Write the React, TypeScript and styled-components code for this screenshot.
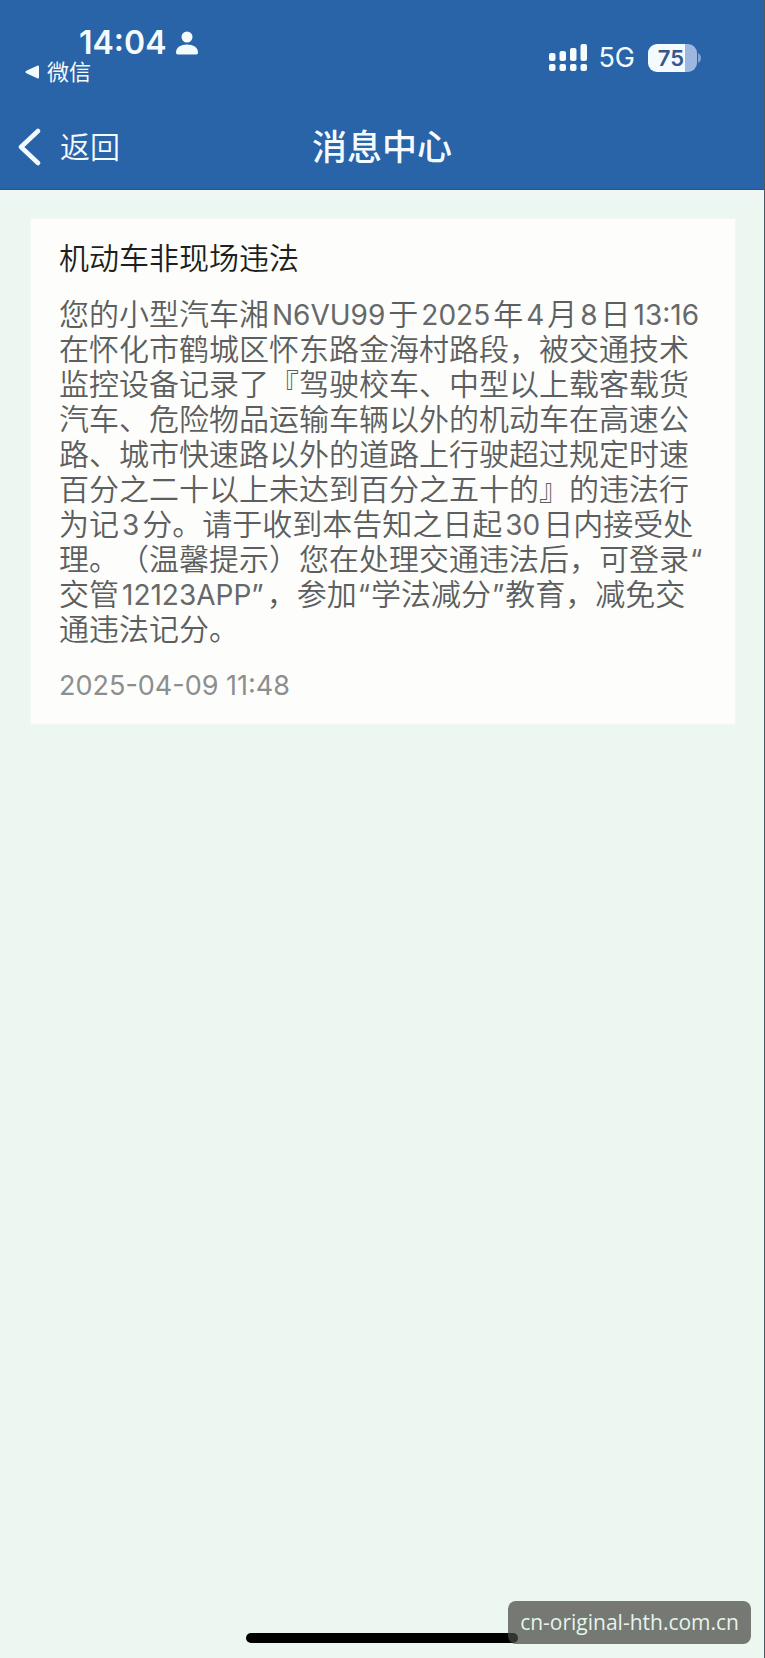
import React from "react";
import styled, { createGlobalStyle } from "styled-components";

const GlobalStyle = createGlobalStyle`
  * { box-sizing: border-box; }
  body {
    margin: 0;
    background: #ebf7f0;
    font-family: Inter, "Noto Sans CJK SC", sans-serif;
  }
  h1, h2, p { margin: 0; }
`;

const Page = styled.div`
  min-height: 100vh;
  display: flex;
  flex-direction: column;
  position: relative;
  border-right: 1px solid #4c5a60;
`;

const Header = styled.header`
  height: 190px;
  background: #2963a8;
  border-bottom: 1px solid #20588f;
  color: #f4fbff;
  display: flex;
  flex-direction: column;
`;

const StatusBar = styled.div`
  display: flex;
  justify-content: space-between;
  align-items: flex-start;
  height: 104px;
  padding: 25px 63px 0 25px;
`;

const StatusLeft = styled.div`
  display: flex;
  flex-direction: column;
`;

const Clock = styled.div`
  display: flex;
  align-items: center;
  gap: 10px;
  padding-left: 54px;
  font-size: 32px;
  line-height: 36px;
  font-weight: 600;
`;

const AppLink = styled.a`
  display: flex;
  align-items: center;
  gap: 8px;
  color: inherit;
  text-decoration: none;
  font-size: 22px;
  line-height: 22px;
`;

const StatusRight = styled.div`
  display: flex;
  align-items: center;
  padding-top: 18px;
`;

const Network = styled.span`
  margin: 0 13px 0 10px;
  font-size: 27px;
  line-height: 30px;
`;

const Battery = styled.div`
  display: flex;
  align-items: center;
  gap: 1px;
`;

const BatteryBody = styled.div`
  width: 49px;
  height: 28px;
  padding-right: 3px;
  border-radius: 9px;
  background: linear-gradient(to right, #f4fbff 76%, #9db8e0 76%);
  color: #37568c;
  font-size: 22px;
  line-height: 28px;
  font-weight: 600;
  text-align: center;
`;

const NavBar = styled.nav`
  display: grid;
  grid-template-columns: 1fr auto 1fr;
  align-items: center;
  height: 86px;
  padding: 2px 18px 0;
`;

const BackButton = styled.button`
  display: flex;
  align-items: center;
  justify-self: start;
  gap: 19px;
  padding: 0;
  border: 0;
  background: none;
  color: inherit;
  font-family: inherit;
  font-size: 30px;
  line-height: 36px;
  font-weight: 350;
`;

const Title = styled.h1`
  font-size: 35px;
  line-height: 40px;
  font-weight: 500;
`;

const Content = styled.main`
  flex: 1;
  padding: 19px 29px 0 31px;
  border-top: 10px solid #eff6f4;
`;

const Card = styled.article`
  padding: 21px 20px 20px 28px;
  background: #fdfefb;
  box-shadow: 0 0 3px 1px #f4f8f7;
`;

const CardTitle = styled.h2`
  color: #1d1f20;
  font-size: 30px;
  line-height: 36px;
  font-weight: 350;
`;

const Message = styled.p`
  margin-top: 21px;
  color: #5c5e60;
  font-size: 30px;
  line-height: 35px;
  font-weight: 350;
  text-spacing-trim: space-all;
`;

const Line = styled.span`
  display: block;
  white-space: nowrap;
`;

const Latin = styled.span<{ $gap: number }>`
  margin: 0 ${({ $gap }) => $gap}px;
  color: #66686a;
  font-size: 28px;
  line-height: 1;
  font-weight: 400;
`;

const Timestamp = styled.time`
  display: block;
  margin-top: 21px;
  color: #8c8e90;
  font-size: 27px;
  line-height: 36px;
`;

const Footer = styled.footer`
  display: flex;
  justify-content: center;
  padding-bottom: 15px;
`;

const HomeIndicator = styled.div`
  width: 36%;
  max-width: 272px;
  height: 10px;
  border-radius: 5px;
  background: #000;
`;

const Watermark = styled.div`
  position: absolute;
  right: 13px;
  bottom: 14px;
  padding: 0 12px;
  border-radius: 8px;
  background: rgba(70, 70, 66, 0.72);
  color: #e4f5ea;
  font-family: "Open Sans", sans-serif;
  font-size: 21px;
  line-height: 43px;
`;

const lines = [
  "您的小型汽车湘N6VU99于2025年4月8日13:16",
  "在怀化市鹤城区怀东路金海村路段，被交通技术",
  "监控设备记录了『驾驶校车、中型以上载客载货",
  "汽车、危险物品运输车辆以外的机动车在高速公",
  "路、城市快速路以外的道路上行驶超过规定时速",
  "百分之二十以上未达到百分之五十的』的违法行",
  "为记3分。请于收到本告知之日起30日内接受处",
  "理。（温馨提示）您在处理交通违法后，可登录“",
  "交管12123APP”，参加“学法减分”教育，减免交",
  "通违法记分。",
];

const renderLine = (line: string) =>
  line.split(/([A-Za-z0-9:“”]+)/).map((part, i) =>
    i % 2 ? (
      <Latin key={i} $gap={/[A-Z0-9]/.test(part) ? 3 : 1}>
        {part}
      </Latin>
    ) : (
      part
    ),
  );

const PersonIcon = () => (
  <svg width="22" height="24" viewBox="0 0 22 24" fill="currentColor" aria-hidden="true">
    <circle cx="11" cy="6" r="5.5" />
    <path d="M0 21.5C0 16.5 4.8 13.6 11 13.6s11 2.9 11 7.9c0 1.3-.7 2-2 2H2c-1.3 0-2-.7-2-2z" />
  </svg>
);

const SignalIcon = () => (
  <svg width="39" height="28" viewBox="0 0 39 28" fill="currentColor" aria-hidden="true">
    <rect x="0" y="9" width="6.5" height="8" rx="2" />
    <rect x="10.5" y="7" width="6.5" height="10" rx="2" />
    <rect x="21" y="4" width="6.5" height="13" rx="2" />
    <rect x="31.5" y="0" width="6.5" height="17" rx="2" />
    <rect x="0" y="20" width="6.5" height="7" rx="2" />
    <rect x="10.5" y="20" width="6.5" height="7" rx="2" />
    <rect x="21" y="20" width="6.5" height="7" rx="2" />
    <rect x="31.5" y="20" width="6.5" height="7" rx="2" />
  </svg>
);

export default function App() {
  return (
    <>
      <GlobalStyle />
      <Page>
        <Header>
          <StatusBar>
            <StatusLeft>
              <Clock>
                14:04
                <PersonIcon />
              </Clock>
              <AppLink href="#">
                <svg width="14" height="14" viewBox="0 0 15 14" fill="currentColor" aria-hidden="true">
                  <path d="M1 6 13 .3Q15-.3 15 1.500V12.500Q15 14.300 13 13.700L1 8Q0 7 1 6z" />
                </svg>
                微信
              </AppLink>
            </StatusLeft>
            <StatusRight>
              <SignalIcon />
              <Network>5G</Network>
              <Battery>
                <BatteryBody>75</BatteryBody>
                <svg width="3" height="10" viewBox="0 0 3 10" fill="#7fa6d8" aria-hidden="true">
                  <path d="M0 0c4 2 4 8 0 10z" />
                </svg>
              </Battery>
            </StatusRight>
          </StatusBar>
          <NavBar>
            <BackButton type="button">
              <svg width="23" height="38" viewBox="0 0 23 38" fill="none" stroke="currentColor" strokeWidth="4.500" strokeLinecap="round" strokeLinejoin="round" aria-hidden="true">
                <path d="M20 3 3 19l17 16" />
              </svg>
              返回
            </BackButton>
            <Title>消息中心</Title>
          </NavBar>
        </Header>
        <Content>
          <Card>
            <CardTitle>机动车非现场违法</CardTitle>
            <Message>
              {lines.map((line) => (
                <Line key={line}>{renderLine(line)}</Line>
              ))}
            </Message>
            <Timestamp dateTime="2025-04-09T11:48">2025-04-09 11:48</Timestamp>
          </Card>
        </Content>
        <Footer>
          <HomeIndicator />
        </Footer>
        <Watermark>cn-original-hth.com.cn</Watermark>
      </Page>
    </>
  );
}
